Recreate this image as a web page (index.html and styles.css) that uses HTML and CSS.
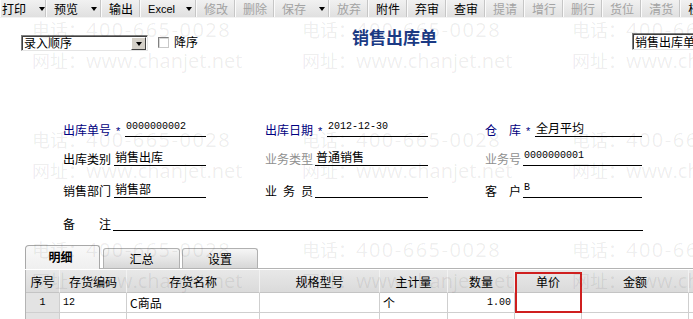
FILE: index.html
```html
<!DOCTYPE html>
<html lang="zh-CN">
<head>
    <meta charset="UTF-8">
    <title>销售出库单</title>
    <link rel="stylesheet" href="styles.css">
</head>
<body>
    <div class="toolbar">
        <span class="tb-btn dd first">打印<i class="caret"></i></span>
        <span class="tb-btn dd">预览<i class="caret"></i></span>
        <span class="tb-btn">输出</span>
        <span class="tb-btn dd latin">Excel<i class="caret"></i></span>
        <span class="tb-btn off">修改</span>
        <span class="tb-btn off">删除</span>
        <span class="tb-btn dd off">保存<i class="caret"></i></span>
        <span class="tb-btn off">放弃</span>
        <span class="tb-btn">附件</span>
        <span class="tb-btn">弃审</span>
        <span class="tb-btn">查审</span>
        <span class="tb-btn off">提请</span>
        <span class="tb-btn off">增行</span>
        <span class="tb-btn off">删行</span>
        <span class="tb-btn off">货位</span>
        <span class="tb-btn off">清货</span>
        <span class="tb-btn">核</span>
    </div>

    <div class="head">
        <div class="combo order">
            <span class="combo-text">录入顺序</span>
            <span class="combo-btn"><i class="caret"></i></span>
        </div>
        <span class="check"></span>
        <span class="check-label">降序</span>
        <h1 class="title">销售出库单</h1>
        <div class="combo tpl">
            <span class="combo-text">销售出库单</span>
        </div>
    </div>

    <div class="form">
        <div class="form-row r1">
            <div class="field c1"><span class="lbl key">出库单号</span><span class="req">*</span><span class="val num">0000000002</span></div>
            <div class="field c2"><span class="lbl key">出库日期</span><span class="req">*</span><span class="val num">2012-12-30</span></div>
            <div class="field c3"><span class="lbl key">仓&emsp;库</span><span class="req">*</span><span class="val">全月平均</span></div>
        </div>
        <div class="form-row r2">
            <div class="field c1"><span class="lbl">出库类别</span><span class="val">销售出库</span></div>
            <div class="field c2"><span class="lbl dim">业务类型</span><span class="val">普通销售</span></div>
            <div class="field c3"><span class="lbl dim">业务号</span><span class="val num">0000000001</span></div>
        </div>
        <div class="form-row r3">
            <div class="field c1"><span class="lbl">销售部门</span><span class="val">销售部</span></div>
            <div class="field c2"><span class="lbl">业&ensp;务&ensp;员</span><span class="val"></span></div>
            <div class="field c3"><span class="lbl">客&emsp;户</span><span class="val num">B</span></div>
        </div>
        <div class="form-row r4">
            <div class="field wide"><span class="lbl">备&emsp;&emsp;注</span><span class="val"></span></div>
        </div>
    </div>

    <div class="tabs">
        <span class="tab on">明细</span>
        <span class="tab">汇总</span>
        <span class="tab last">设置</span>
    </div>

    <div class="sheet">
        <div class="row head-row">
            <span>序号</span>
            <span>存货编码</span>
            <span>存货名称</span>
            <span>规格型号</span>
            <span>主计量</span>
            <span>数量</span>
            <span>单价</span>
            <span>金额</span>
            <span></span>
        </div>
        <div class="row">
            <span class="rh num">1</span>
            <span class="num">12</span>
            <span>C商品</span>
            <span></span>
            <span>个</span>
            <span class="num right">1.00</span>
            <span></span>
            <span></span>
            <span></span>
        </div>
        <div class="row">
            <span class="rh"></span>
            <span></span>
            <span></span>
            <span></span>
            <span></span>
            <span></span>
            <span></span>
            <span></span>
            <span></span>
        </div>
        <div class="mark-box"></div>
    </div>

    <div class="watermark">
        <div class="wm-tile"><div><b>电话：</b><span class="wm-tel">400-665-0028</span></div><div><b>网址：</b>www.chanjet.net</div></div>
        <div class="wm-tile"><div><b>电话：</b><span class="wm-tel">400-665-0028</span></div><div><b>网址：</b>www.chanjet.net</div></div>
        <div class="wm-tile"><div><b>电话：</b><span class="wm-tel">400-665-0028</span></div><div><b>网址：</b>www.chanjet.net</div></div>
        <div class="wm-tile"><div><b>电话：</b><span class="wm-tel">400-665-0028</span></div><div><b>网址：</b>www.chanjet.net</div></div>
        <div class="wm-tile"><div><b>电话：</b><span class="wm-tel">400-665-0028</span></div><div><b>网址：</b>www.chanjet.net</div></div>
        <div class="wm-tile"><div><b>电话：</b><span class="wm-tel">400-665-0028</span></div><div><b>网址：</b>www.chanjet.net</div></div>
        <div class="wm-tile"><div><b>电话：</b><span class="wm-tel">400-665-0028</span></div><div><b>网址：</b>www.chanjet.net</div></div>
        <div class="wm-tile"><div><b>电话：</b><span class="wm-tel">400-665-0028</span></div><div><b>网址：</b>www.chanjet.net</div></div>
        <div class="wm-tile"><div><b>电话：</b><span class="wm-tel">400-665-0028</span></div><div><b>网址：</b>www.chanjet.net</div></div>
    </div>
</body>
</html>
```

FILE: styles.css
```css
html, body {
    margin: 0;
    padding: 0;
    overflow: hidden;
}

body {
    position: relative;
    width: 693px;
    height: 319px;
    background-color: #fff;
    color: #000;
    font-family: "Noto Sans CJK SC", sans-serif;
    font-size: 12px;
}

.num {
    font-family: "Liberation Mono", monospace;
    font-size: 10px;
}

.caret {
    display: inline-block;
    width: 0;
    height: 0;
    border-left: 3px solid transparent;
    border-right: 3px solid transparent;
    border-top: 4px solid #000;
}

/* toolbar */

.toolbar {
    display: flex;
    height: 17px;
    background: linear-gradient(#f1f1f1, #e0e0e0);
    border-bottom: 1px solid #f3f3f3;
    white-space: nowrap;
}

.tb-btn {
    display: flex;
    align-items: center;
    flex-shrink: 0;
    padding: 0 6px 0 8px;
    line-height: 16px;
    border-right: 1px solid #c6c6c6;
    box-shadow: inset 1px 0 #fbfbfb;
}

.tb-btn.dd {
    padding-right: 3px;
}

.tb-btn.first {
    padding-left: 2px;
    padding-right: 0;
}

.tb-btn .caret {
    margin-left: 13px;
}

.tb-btn.latin {
    font-family: "Liberation Sans", sans-serif;
    font-size: 11px;
}

.tb-btn.latin .caret {
    margin-left: 11px;
}

.tb-btn.off {
    color: #a3a3a3;
}

/* head line */

.head {
    display: flex;
    align-items: flex-start;
    height: 17px;
    margin-top: 15px;
    padding-left: 21px;
    white-space: nowrap;
}

.head > * {
    flex-shrink: 0;
}

.combo {
    display: flex;
    align-items: center;
    box-sizing: border-box;
    background-color: #fff;
    border-top: 1px solid #808080;
    border-left: 1px solid #808080;
    border-right: 1px solid #e4e4e4;
    border-bottom: 1px solid #e4e4e4;
    box-shadow: inset 1px 1px #404040;
}

.combo.order {
    width: 127px;
    height: 16px;
    margin-top: 2px;
}

.combo.tpl {
    width: 80px;
    height: 17px;
    margin-left: 195px;
}

.combo-text {
    flex: 1;
    padding-left: 2px;
    line-height: 14px;
}

.combo-btn {
    display: flex;
    align-items: center;
    justify-content: center;
    box-sizing: border-box;
    width: 15px;
    height: 13px;
    margin: 1px 1px 0 0;
    background-color: #d4d0c8;
    border-top: 1px solid #fff;
    border-left: 1px solid #fff;
    border-right: 1px solid #404040;
    border-bottom: 1px solid #404040;
}

.check {
    box-sizing: border-box;
    width: 11px;
    height: 11px;
    margin: 4px 0 0 10px;
    background-color: #fff;
    border-top: 1px solid #808080;
    border-left: 1px solid #808080;
    border-right: 1px solid #c8c8c8;
    border-bottom: 1px solid #c8c8c8;
    box-shadow: inset 1px 1px #d8d8d8;
}

.check-label {
    margin: 2px 0 0 5px;
    line-height: 14px;
}

.title {
    margin: -6px 0 0 154px;
    color: #1b3a84;
    font-size: 17px;
    font-weight: bold;
    line-height: 20px;
}

/* form */

.form {
    padding-left: 63px;
}

.form-row {
    display: flex;
    height: 16px;
}

.r1 { margin-top: 71px; }
.r2 { margin-top: 13px; }
.r3 { margin-top: 16px; }
.r4 { margin-top: 17px; }

.field {
    display: flex;
    align-items: flex-end;
    flex-shrink: 0;
}

.field.c1 { width: 143px; margin-right: 59px; }
.field.c2 { width: 163px; margin-right: 57px; }
.field.c3 { width: 157px; }
.field.wide { width: 580px; }

.lbl {
    margin-bottom: 1px;
    line-height: 13px;
    white-space: nowrap;
}

.lbl.key {
    color: #000080;
}

.lbl.dim {
    color: #8f8f8f;
}

.req {
    width: 14px;
    align-self: flex-start;
    padding-top: 4px;
    color: #000080;
    font-family: "Liberation Sans", sans-serif;
    font-size: 11px;
    line-height: 12px;
    text-align: center;
}

.val {
    flex: 1;
    height: 15px;
    margin-left: 2px;
    padding-left: 1px;
    border-bottom: 1px solid #000;
    line-height: 13px;
    white-space: nowrap;
}

.req + .val {
    margin-left: 0;
}

.c1 .lbl + .val {
    margin-left: 3px;
}

.val.num {
    font-size: 10px;
    line-height: 12px;
}

/* tabs */

.tabs {
    display: flex;
    align-items: flex-end;
    height: 23px;
    margin: 14px 0 0 25px;
    border-bottom: 1px solid #b4b4b4;
}

.tab {
    box-sizing: border-box;
    width: 77px;
    height: 20px;
    margin-right: 2px;
    background: linear-gradient(#f6f6f6, #d7d7d7);
    border: 1px solid #b0b0b0;
    border-bottom: none;
    border-radius: 3px 3px 0 0;
    line-height: 19px;
    text-align: center;
}

.tab.on {
    width: 75px;
    height: 24px;
    margin-right: 3px;
    margin-bottom: -1px;
    padding-right: 4px;
    background: linear-gradient(#f9f9f9, #efefef);
    border-color: #a8a8a8;
    border-radius: 4px 3px 0 0;
    font-weight: bold;
    line-height: 22px;
}

.tab.last {
    width: 76px;
}

/* grid */

.sheet {
    position: relative;
    margin: 1px 0 0 25px;
    border-left: 1px solid #b4b4b4;
}

.row {
    display: grid;
    grid-template-columns: 34px 67px 133px 120px 68px 67px 67px 107px 60px;
    height: 20px;
}

.row > span {
    box-sizing: border-box;
    padding-left: 3px;
    border-right: 1px solid #cfcfcf;
    border-bottom: 1px solid #cfcfcf;
    line-height: 19px;
    white-space: nowrap;
    overflow: hidden;
}

.row .num {
    line-height: 20px;
}

.row .right {
    padding-right: 3px;
    text-align: right;
}

.row .rh {
    padding-left: 0;
    background-color: #e3e3e3;
    text-align: center;
}

.head-row {
    height: 23px;
    background: linear-gradient(#e8e8e8, #dadada);
}

.head-row > span {
    padding-left: 0;
    border-right-color: #f2f2f2;
    border-bottom-color: #c4c4c4;
    line-height: 24px;
    text-align: center;
}

.mark-box {
    position: absolute;
    left: 489px;
    top: 2px;
    width: 67px;
    height: 41px;
    box-sizing: border-box;
    border: 2px solid #cf1f1f;
}

/* watermark overlay */

.watermark {
    position: absolute;
    left: 32px;
    top: 14px;
    display: grid;
    grid-template-columns: repeat(3, 270px);
    grid-auto-rows: 110px;
    color: rgba(0, 0, 0, 0.075);
    font-family: "Open Sans", sans-serif;
    font-size: 20px;
    line-height: 30px;
    white-space: nowrap;
    pointer-events: none;
}

.watermark b {
    font-family: "Noto Sans CJK SC", sans-serif;
    font-size: 18px;
    font-weight: normal;
}

.wm-tel {
    letter-spacing: 1.5px;
}
```
